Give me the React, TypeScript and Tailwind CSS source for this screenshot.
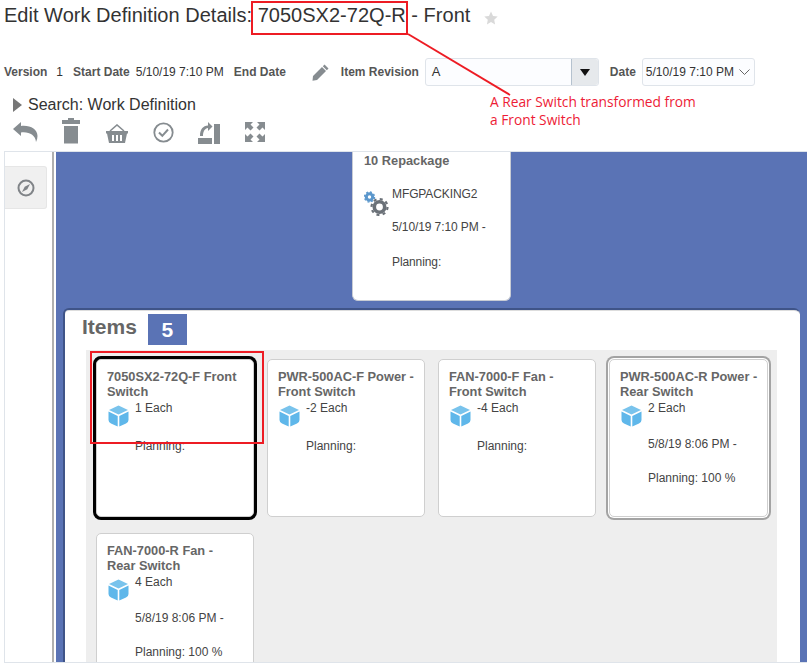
import React from "react";

const items = [
  { title: ["7050SX2-72Q-F Front", "Switch"], qty: "1 Each", date: "", plan: "Planning:", look: "selected" },
  { title: ["PWR-500AC-F Power -", "Front Switch"], qty: "-2 Each", date: "", plan: "Planning:", look: "" },
  { title: ["FAN-7000-F Fan -", "Front Switch"], qty: "-4 Each", date: "", plan: "Planning:", look: "" },
  { title: ["PWR-500AC-R Power -", "Rear Switch"], qty: "2 Each", date: "5/8/19 8:06 PM -", plan: "Planning: 100 %", look: "active" },
  { title: ["FAN-7000-R Fan -", "Rear Switch"], qty: "4 Each", date: "5/8/19 8:06 PM -", plan: "Planning: 100 %", look: "" },
];

const Cube = () => (
  <svg width="21" height="22" viewBox="0 0 21 22" className="shrink-0">
    <path d="M10.5 0.5 L20 5 L10.5 9.5 L1 5 Z" fill="#79c3ec" />
    <path d="M0.5 6.5 L9.7 11 V21.5 L3 18.5 Q0.5 17.5 0.5 15 Z" fill="#5fb7ea" />
    <path d="M20.5 6.5 L11.3 11 V21.5 L18 18.5 Q20.5 17.5 20.5 15 Z" fill="#5fb7ea" />
  </svg>
);

const Gears = () => (
  <svg width="25" height="25" viewBox="0 0 25 25" className="shrink-0">
    <circle cx="5.5" cy="6" r="3.2" fill="none" stroke="#5b97cc" strokeWidth="3" />
    <circle cx="5.5" cy="6" r="5" fill="none" stroke="#5b97cc" strokeWidth="1.4" strokeDasharray="2 1.9" />
    <circle cx="15.5" cy="16" r="5.2" fill="none" stroke="#6b7178" strokeWidth="3.6" />
    <circle cx="15.5" cy="16" r="8" fill="none" stroke="#6b7178" strokeWidth="2.2" strokeDasharray="3 3.28" />
  </svg>
);

const Toolbar = () => (
  <div className="flex items-center h-[27px] mt-[3px] text-[#868c90]">
    {/* undo */}
    <svg width="25" height="21" viewBox="0 0 25 21" className="ml-[13px]">
      <path d="M0 8 L8 1 V5 C17 4 24.5 8 24.5 15 C24.5 17 24 19 23 21 C22.5 14 16 10.5 8 11.5 V15 Z" fill="currentColor" />
    </svg>
    {/* trash */}
    <svg width="18" height="26" viewBox="0 0 18 26" className="ml-[24px] -mt-[1px]">
      <path d="M6 0 H12 V2 H18 V6 H0 V2 H6 Z M2 8 H16 V25.5 H2 Z" fill="currentColor" />
    </svg>
    {/* basket */}
    <svg width="22" height="19" viewBox="0 0 22 19" className="ml-[26px] mt-[3px]">
      <path d="M4 7 L11 1 L18 7" fill="none" stroke="currentColor" strokeWidth="1.6" />
      <path d="M0 7 H22 V9.500 H21 L19 19 H3 L1 9.500 H0 Z" fill="currentColor" />
      <path d="M6 11 H8 V17 H6 Z M10 11 H12 V17 H10 Z M14 11 H16 V17 H14 Z" fill="#fff" />
    </svg>
    {/* check circle */}
    <svg width="21" height="21" viewBox="0 0 21 21" className="ml-[25px] mt-[2px]">
      <circle cx="10.5" cy="10.5" r="9.2" fill="none" stroke="currentColor" strokeWidth="1.8" />
      <path d="M6 10.5 L9.3 13.8 L15 7.5" fill="none" stroke="currentColor" strokeWidth="2" />
    </svg>
    {/* promote */}
    <svg width="23" height="24" viewBox="0 0 23 24" className="ml-[23px]">
      <path d="M17 4 H23 V24 H17 Z M1 18 H15 V24 H1 Z" fill="currentColor" />
      <path d="M3 16 C3 9 6 6 11 5.500 V2 L15.500 6.500 L11 11 V8 C8 8.500 6 11 6 16 Z" fill="currentColor" />
    </svg>
    {/* expand */}
    <svg width="20" height="20" viewBox="0 0 20 20" className="ml-[25px]">
      <path d="M0 0 H8 L5.500 2.500 L8.500 5.500 L5.500 8.500 L2.500 5.500 L0 8 Z" fill="currentColor" />
      <path d="M20 0 H12 L14.500 2.500 L11.500 5.500 L14.500 8.500 L17.500 5.500 L20 8 Z" fill="currentColor" />
      <path d="M0 20 H8 L5.500 17.500 L8.500 14.500 L5.500 11.500 L2.500 14.500 L0 12 Z" fill="currentColor" />
      <path d="M20 20 H12 L14.500 17.500 L11.500 14.500 L14.500 11.500 L17.500 14.500 L20 12 Z" fill="currentColor" />
    </svg>
  </div>
);

const ItemCard = ({ item }: { item: (typeof items)[number] }) => {
  let ring = "w-[158px]";
  if (item.look === "selected") ring = "w-[158px] shadow-[0_0_0_3px_#000]";
  if (item.look === "active") ring = "w-[159px] shadow-[0_0_0_1px_#fff,0_0_0_3px_#a3a3a3]";
  return (
    <div className={`h-[158px] bg-white border border-[#cfcfcf] rounded-[5px] pl-[10px] pt-[9px] shrink-0 ${ring}`}>
      <h3 className="text-[12.8px] leading-[15px] font-bold text-[#666]">
        {item.title[0]}
        <br />
        {item.title[1]}
      </h3>
      <div className="flex gap-[6px] mt-[2px]">
        <div className="mt-[4px] ml-[1px]">
          <Cube />
        </div>
        <div className="text-[12px] leading-[14px] text-[#444]">
          <div>{item.qty}</div>
          {item.date ? <div className="mt-[22px]">{item.date}</div> : null}
          <div className={item.date ? "mt-[20px]" : "mt-[24px]"}>{item.plan}</div>
        </div>
      </div>
    </div>
  );
};

export default function App() {
  return (
    <div className="relative w-[810px] h-[665px] overflow-hidden bg-white font-['Liberation_Sans',Arial,sans-serif] text-[#333]">
      {/* title */}
      <div className="flex items-center h-[30px] pl-[4px]">
        <h1 className="text-[20px] leading-[30px] tracking-[0.02px] whitespace-pre">Edit Work Definition Details: 7050SX2-72Q-R - Front</h1>
        <svg width="14" height="14" viewBox="0 0 24 24" className="ml-[14px] mt-[5px]">
          <path d="M12 1 L15.500 8.500 L23.500 9.500 L17.500 15 L19 23 L12 19 L5 23 L6.500 15 L0.500 9.500 L8.500 8.500 Z" fill="#d9d9d9" />
        </svg>
      </div>

      {/* details row */}
      <div className="flex items-center h-[28px] mt-[28px] text-[12px]">
        <span className="ml-[4px] font-bold text-[#555]">Version</span>
        <span className="ml-[9px]">1</span>
        <span className="ml-[10px] font-bold text-[#555]">Start Date</span>
        <span className="ml-[6px]">5/10/19 7:10 PM</span>
        <span className="ml-[10px] font-bold text-[#555]">End Date</span>
        <svg width="17" height="17" viewBox="0 0 17 17" className="ml-[26px]">
          <path d="M12.500 0.500 L16.500 4.500 L14.800 6.200 L10.800 2.200 Z M10 3 L14 7 L5 16 L0.500 16.800 L1 12 Z" fill="#868c90" />
        </svg>
        <span className="ml-[12px] font-bold text-[#555]">Item Revision</span>
        <div className="flex items-stretch ml-[6px] w-[174px] h-[28px] bg-[#fcfdff] border border-[#dfe4ea] rounded-[3px]">
          <span className="flex-1 pl-[6px] leading-[26px] text-[13px]">A</span>
          <span className="flex items-center justify-center w-[27px] bg-[#e6e9ec] border-l border-[#b5c2cf] rounded-r-[3px]">
            <svg width="10" height="7" viewBox="0 0 10 7">
              <path d="M0 0 H10 L5 7 Z" fill="#111" />
            </svg>
          </span>
        </div>
        <span className="ml-[11px] font-bold text-[#555]">Date</span>
        <div className="flex items-center justify-between ml-[6px] w-[113px] h-[28px] pl-[3px] pr-[4px] bg-[#fcfdff] border border-[#dfe4ea] rounded-[3px]">
          <span>5/10/19 7:10 PM</span>
          <svg width="11" height="6" viewBox="0 0 11 6">
            <path d="M0.500 0.500 L5.500 5.500 L10.500 0.500" fill="none" stroke="#666" strokeWidth="1" />
          </svg>
        </div>
      </div>

      {/* search */}
      <div className="flex items-center h-[20px] mt-[9px] pl-[13px]">
        <svg width="9" height="14" viewBox="0 0 9 14">
          <path d="M0 0 L9 7 L0 14 Z" fill="#777" />
        </svg>
        <span className="ml-[6px] text-[16px] leading-[20px]">Search: Work Definition</span>
      </div>

      <Toolbar />

      {/* main panel */}
      <div className="flex h-[512px] mt-[6px] ml-[4px] mr-[3px] border-t border-b border-l border-[#dfe4ea] overflow-hidden">
        <div className="w-[47px] shrink-0 pt-[14px]">
          <div className="flex items-center justify-center w-[42px] h-[43px] bg-[#f0f0f0] border border-l-0 border-[#e6e6e6] rounded-r-[3px]">
            <svg width="18" height="18" viewBox="0 0 18 18">
              <circle cx="9" cy="9" r="7.500" fill="none" stroke="#808488" strokeWidth="2" />
              <path d="M13 5 L10.300 10.300 L5 13 L7.700 7.700 Z" fill="#808488" />
            </svg>
          </div>
        </div>
        <div className="w-[2px] shrink-0 bg-[#b0b0b0]" />
        <div className="flex-1 ml-[2px] bg-[#5a73b5] overflow-hidden">
          {/* operation card */}
          <div className="relative ml-[296px] w-[159px] h-[149px] bg-white border border-t-0 border-[#c8ccd4] rounded-b-[6px] pl-[11px] pt-[1px]">
            <h3 className="text-[12.8px] leading-[15px] font-bold text-[#666]">10 Repackage</h3>
            <div className="flex gap-[4px] mt-[19px]">
              <div className="mt-[4px] -mr-[1px]">
                <Gears />
              </div>
              <div className="text-[12px] leading-[14px] tracking-[-0.1px] text-[#444]">
                <div>MFGPACKING2</div>
                <div className="mt-[19px]">5/10/19 7:10 PM -</div>
                <div className="mt-[21px]">Planning:</div>
              </div>
            </div>
          </div>

          {/* items panel */}
          <div className="h-[400px] mt-[7px] ml-[7px] mr-[7px] bg-white border-t-2 border-l-2 border-[#3f5488] rounded-t-[6px] shadow-[inset_0_1px_0_#ddd]">
            <div className="flex items-start h-[40px] pt-[4px] pl-[17px]">
              <span className="text-[21px] leading-[26px] font-bold text-[#666]">Items</span>
              <span className="flex items-center justify-center w-[39px] h-[31px] ml-[11px] bg-[#5a73b5] text-[21px] font-bold text-white">5</span>
            </div>
            <div className="flex flex-wrap content-start gap-x-[13px] gap-y-[16px] w-[691px] h-[320px] ml-[21px] pt-[9px] pl-[10px] bg-[#eeeeee]">
              {items.map((item) => (
                <ItemCard key={item.title[0]} item={item} />
              ))}
            </div>
          </div>
        </div>
      </div>

      {/* red callouts drawn over the screenshot */}
      <div className="absolute left-[251px] top-[1px] w-[157px] h-[34px] border-2 border-[#ed1c24]" />
      <div className="absolute left-[90px] top-[351px] w-[174px] h-[93px] border-2 border-[#ed1c24]" />
      <svg width="120" height="70" viewBox="0 0 120 70" className="absolute left-[400px] top-[30px]">
        <path d="M8 4 L110 65" stroke="#ed1c24" strokeWidth="2" fill="none" />
      </svg>
      <div className="absolute left-[490px] top-[93px] text-[13.75px] leading-[18px] text-[#ed1c36] font-['Open_Sans',sans-serif]">
        A Rear Switch transformed from
        <br />a Front Switch
      </div>
    </div>
  );
}
